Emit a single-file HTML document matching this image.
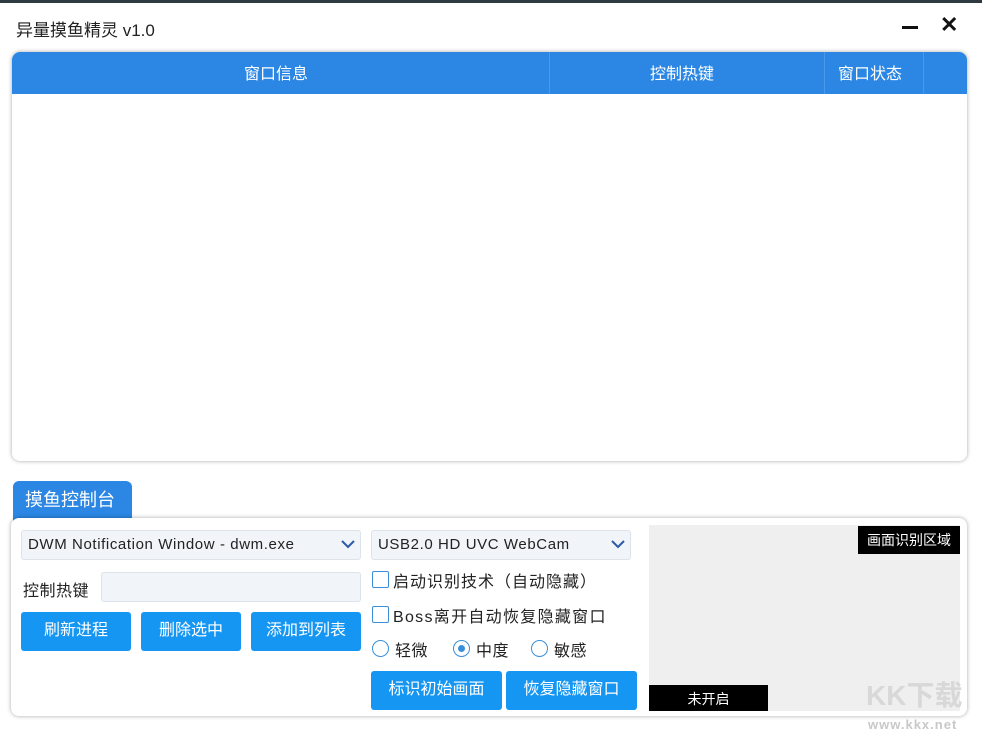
<!DOCTYPE html>
<html><head><meta charset="utf-8"><style>
*{box-sizing:border-box;margin:0;padding:0}
body{width:982px;height:732px;background:#fff;position:relative;overflow:hidden;font-family:"Liberation Sans","Noto Sans CJK SC",sans-serif;color:#222}
.a{position:absolute}
.panel{background:#fff;border-radius:8px;box-shadow:0 0 4px rgba(0,0,0,.35)}
.hd{color:#fff;font-size:16px;top:60px}
.sel{background:#f1f4f8;border:1px solid #dde3ea;border-radius:3px;height:30px;font-size:15px;line-height:27px;padding-left:6px;letter-spacing:.6px}
.btn{background:#1696f3;color:#fff;border-radius:3px;font-size:16px;text-align:center;line-height:37px;height:39px}
.cb{width:17px;height:17px;border:1.5px solid #3b8fd8;border-radius:2px}
.rd{width:17px;height:17px;border:1.5px solid #3b8fd8;border-radius:50%}
.lbl{font-size:16px;letter-spacing:.5px}
</style></head><body>
<div class="a" style="left:0;top:0;width:982px;height:3px;background:#2d3a40"></div>
<div class="a" style="left:16px;top:16px;font-size:17px;color:#222">异量摸鱼精灵 v1.0</div>
<div class="a" style="left:902px;top:26px;width:16px;height:3px;background:#111"></div>
<div class="a" style="left:940px;top:12px;font-size:22px;font-weight:bold;color:#111">✕</div>
<div class="a panel" style="left:12px;top:52px;width:955px;height:409px"></div>
<div class="a" style="left:12px;top:52px;width:955px;height:42px;background:#2b87e3;border-radius:8px 8px 0 0"></div>
<div class="a" style="left:549px;top:52px;width:1px;height:42px;background:#4a98e6"></div>
<div class="a" style="left:824px;top:52px;width:1px;height:42px;background:#4a98e6"></div>
<div class="a" style="left:923px;top:52px;width:1px;height:42px;background:#4a98e6"></div>
<div class="a hd" style="left:244px">窗口信息</div>
<div class="a hd" style="left:650px">控制热键</div>
<div class="a hd" style="left:838px">窗口状态</div>
<div class="a" style="left:13px;top:481px;width:119px;height:40px;background:#2b87e3;border-radius:6px 6px 0 0;color:#fff;font-size:18px;padding:5px 0 0 12px">摸鱼控制台</div>
<div class="a panel" style="left:11px;top:518px;width:956px;height:198px"></div>
<div class="a sel" style="left:21px;top:530px;width:340px">DWM Notification Window - dwm.exe</div>
<div class="a sel" style="left:371px;top:530px;width:260px">USB2.0 HD UVC WebCam</div>
<svg class="a" style="left:340px;top:538px" width="16" height="12"><path d="M2 3l6 6 6-6" stroke="#2a5aa8" stroke-width="2" fill="none"/></svg>
<svg class="a" style="left:610px;top:538px" width="16" height="12"><path d="M2 3l6 6 6-6" stroke="#2a5aa8" stroke-width="2" fill="none"/></svg>
<div class="a lbl" style="left:23px;top:577px">控制热键</div>
<div class="a sel" style="left:101px;top:572px;width:260px"></div>
<div class="a btn" style="left:21px;top:612px;width:110px">刷新进程</div>
<div class="a btn" style="left:141px;top:612px;width:100px">删除选中</div>
<div class="a btn" style="left:251px;top:612px;width:110px">添加到列表</div>
<div class="a cb" style="left:372px;top:571px"></div>
<div class="a lbl" style="left:393px;top:568px;letter-spacing:1px">启动识别技术（自动隐藏）</div>
<div class="a cb" style="left:372px;top:606px"></div>
<div class="a lbl" style="left:393px;top:603px;letter-spacing:1.3px">Boss离开自动恢复隐藏窗口</div>
<div class="a rd" style="left:372px;top:640px"></div>
<div class="a lbl" style="left:395px;top:637px">轻微</div>
<div class="a rd" style="left:453px;top:640px"></div>
<div class="a" style="left:458px;top:645px;width:7px;height:7px;border-radius:50%;background:#3b8fd8"></div>
<div class="a lbl" style="left:476px;top:637px">中度</div>
<div class="a rd" style="left:531px;top:640px"></div>
<div class="a lbl" style="left:554px;top:637px">敏感</div>
<div class="a btn" style="left:371px;top:671px;width:131px">标识初始画面</div>
<div class="a btn" style="left:506px;top:671px;width:131px">恢复隐藏窗口</div>
<div class="a" style="left:649px;top:525px;width:311px;height:186px;background:#efefef"></div>
<div class="a" style="left:858px;top:526px;width:102px;height:28px;background:#000;color:#fff;font-size:14px;text-align:center;line-height:28px">画面识别区域</div>
<div class="a" style="left:649px;top:685px;width:119px;height:26px;background:#000;color:#fff;font-size:14px;text-align:center;line-height:28px">未开启</div>
<div class="a" style="left:866px;top:674px;font-size:28px;font-weight:bold;color:#d8d8d8">KK下载</div>
<div class="a" style="left:868px;top:717px;font-size:13px;font-weight:bold;color:#c8c8c8;letter-spacing:1px">www.kkx.net</div>
</body></html>
